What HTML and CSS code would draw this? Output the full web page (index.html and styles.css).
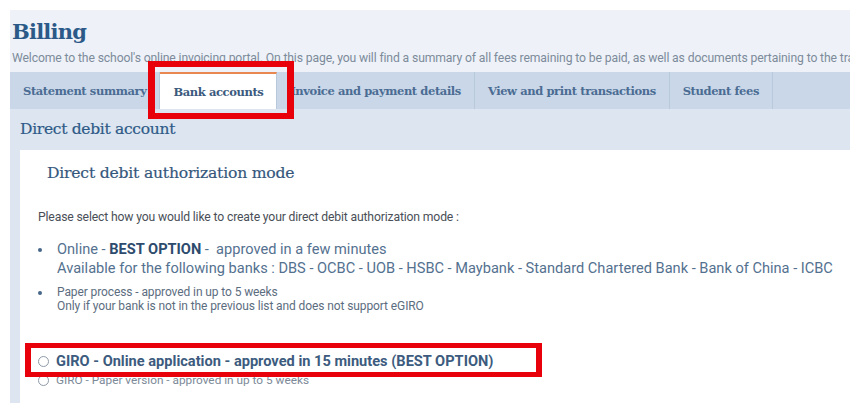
FILE: index.html
```html
<!DOCTYPE html>
<html lang="en">
<head>
<meta charset="utf-8">
<title>Billing</title>
<link rel="stylesheet" href="styles.css">
</head>
<body>
<div class="page">
  <div class="panel">
    <header class="head">
      <h1 class="title">Billing</h1>
      <p class="intro">Welcome to the school's online invoicing portal. On this page, you will find a summary of all fees remaining to be paid, as well as documents pertaining to the transactions.</p>
    </header>
    <nav class="tabs">
      <a class="tab">Statement summary</a>
      <a class="tab active">Bank accounts</a>
      <a class="tab">Invoice and payment details</a>
      <a class="tab">View and print transactions</a>
      <a class="tab">Student fees</a>
    </nav>
    <section class="account">
      <h2 class="account-title">Direct debit account</h2>
      <div class="card">
        <h3 class="card-title">Direct debit authorization mode</h3>
        <p class="lead">Please select how you would like to create your direct debit authorization mode :</p>
        <ul class="modes">
          <li class="mode mode-main">Online - <b>BEST OPTION</b> -&nbsp; approved in a few minutes<br>Available for the following banks : DBS - OCBC - UOB - HSBC - Maybank - Standard Chartered Bank - Bank of China - ICBC</li>
          <li class="mode mode-alt">Paper process - approved in up to 5 weeks<br>Only if your bank is not in the previous list and does not support eGIRO</li>
        </ul>
        <div class="choices">
          <label class="choice choice-main"><span class="radio"></span>GIRO - Online application - approved in 15 minutes (BEST OPTION)</label>
          <label class="choice choice-alt"><span class="radio"></span>GIRO - Paper version - approved in up to 5 weeks</label>
        </div>
      </div>
    </section>
  </div>
  <div class="mark mark-tab"></div>
  <div class="mark mark-choice"></div>
</div>
</body>
</html>
```
FILE: styles.css
```css
html, body {
  margin: 0;
  padding: 0;
  background: #ffffff;
  overflow: hidden;
}

.page {
  position: relative;
  width: 850px;
  height: 403px;
  padding: 10px 0 0 10px;
  box-sizing: border-box;
  overflow: hidden;
}

.panel {
  background: #eef2f8;
  height: 100%;
  display: flex;
  flex-direction: column;
}

.head {
  padding: 6px 0 0 2px;
}

.title {
  margin: 0;
  font-family: "DejaVu Serif", serif;
  font-weight: 700;
  font-size: 21px;
  letter-spacing: -0.8px;
  line-height: 32px;
  color: #2c5a88;
}

.intro {
  margin: 2px 0 0;
  font-family: Roboto, "Liberation Sans", sans-serif;
  font-size: 12.2px;
  line-height: 16px;
  color: #7d8b9b;
  white-space: nowrap;
  overflow: hidden;
  letter-spacing: -0.13px;
}

.tabs {
  margin-top: 6px;
  display: flex;
  height: 37px;
  background: #c9d7e8;
}

.tab {
  display: flex;
  align-items: center;
  padding: 0 13px;
  border-right: 1px solid #b9c9dc;
  font-family: "DejaVu Serif", serif;
  font-weight: 700;
  font-size: 11.5px;
  letter-spacing: -0.4px;
  color: #4b6c93;
}

.tab.active {
  background: #ffffff;
  border-top: 2px solid #e8874f;
  color: #3b5a7e;
}

.account {
  flex: 1;
  background: #dce5f0;
  padding-left: 10px;
  display: flex;
  flex-direction: column;
}

.account-title {
  margin: 0;
  padding: 10px 0 0;
  height: 31px;
  font-family: "DejaVu Serif", serif;
  font-weight: 400;
  font-size: 15.5px;
  letter-spacing: -0.3px;
  line-height: 20px;
  color: #2e5a87;
  -webkit-text-stroke: 0.2px #2e5a87;
}

.card {
  flex: 1;
  background: #ffffff;
  padding: 12px 0 0 18px;
}

.card-title {
  margin: 0 0 0 9px;
  font-family: "DejaVu Serif", serif;
  font-weight: 400;
  font-size: 15.6px;
  letter-spacing: -0.2px;
  line-height: 22px;
  color: #35577c;
  -webkit-text-stroke: 0.2px #35577c;
}

.lead {
  margin: 26px 0 0;
  font-family: Roboto, "Liberation Sans", sans-serif;
  font-size: 12.2px;
  line-height: 14px;
  color: #4a4f57;
  letter-spacing: -0.15px;
}

.modes {
  list-style: none;
  margin: 16px 0 0;
  padding: 0;
  font-family: Roboto, "Liberation Sans", sans-serif;
}

.mode {
  position: relative;
  padding-left: 19px;
}

.mode::before {
  content: "";
  position: absolute;
  left: 0;
  width: 4px;
  height: 4px;
  border-radius: 50%;
  background: #46668a;
}

.mode-main {
  font-size: 14.6px;
  line-height: 19px;
  color: #54718f;
}

.mode-main::before {
  top: 8px;
}

.mode-main b {
  color: #2d4b6d;
}

.mode-alt {
  margin-top: 7px;
  font-size: 12px;
  line-height: 14px;
  color: #5c6d80;
  letter-spacing: -0.1px;
}

.mode-alt::before {
  top: 6px;
}

.choices {
  margin-top: 40px;
  font-family: Roboto, "Liberation Sans", sans-serif;
}

.choice {
  display: flex;
  align-items: center;
}

.radio {
  width: 9px;
  height: 9px;
  border: 1px solid #8e9aa8;
  border-radius: 50%;
  margin-right: 7px;
  flex: none;
}

.choice-main {
  font-size: 14.6px;
  font-weight: 700;
  line-height: 17px;
  color: #3c5b7e;
}

.choice-alt {
  font-size: 11.8px;
  line-height: 14px;
  color: #7c8998;
  margin-top: 3px;
}

.mark {
  position: absolute;
  border-style: solid;
  border-color: #e8000a;
  box-sizing: border-box;
}

.mark-tab {
  left: 148px;
  top: 61px;
  width: 146px;
  height: 58px;
  border-width: 6px 7px;
}

.mark-choice {
  left: 25px;
  top: 343px;
  width: 517px;
  height: 34px;
  border-width: 5px 6px;
}
```
